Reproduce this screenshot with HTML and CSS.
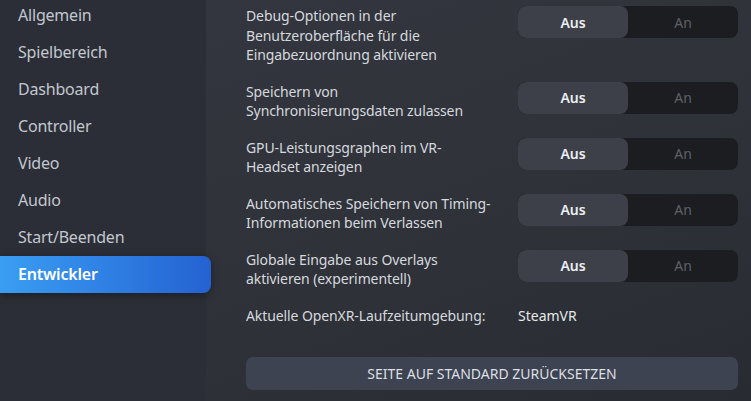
FILE: index.html
```html
<!DOCTYPE html>
<html lang="de">
<head>
<meta charset="utf-8">
<title>Einstellungen – Entwickler</title>
<link rel="stylesheet" href="styles.css">
</head>
<body>
<div class="app">
  <nav class="sidebar">
    <div class="nav-item">Allgemein</div>
    <div class="nav-item">Spielbereich</div>
    <div class="nav-item">Dashboard</div>
    <div class="nav-item">Controller</div>
    <div class="nav-item">Video</div>
    <div class="nav-item">Audio</div>
    <div class="nav-item">Start/Beenden</div>
    <div class="nav-item active">Entwickler</div>
  </nav>
  <main class="content">
    <div class="row">
      <div class="label">Debug-Optionen in der<br>Benutzeroberfläche für die<br>Eingabezuordnung aktivieren</div>
      <div class="toggle"><span class="seg on">Aus</span><span class="seg">An</span></div>
    </div>
    <div class="row">
      <div class="label">Speichern von<br>Synchronisierungsdaten zulassen</div>
      <div class="toggle"><span class="seg on">Aus</span><span class="seg">An</span></div>
    </div>
    <div class="row">
      <div class="label">GPU-Leistungsgraphen im VR-<br>Headset anzeigen</div>
      <div class="toggle"><span class="seg on">Aus</span><span class="seg">An</span></div>
    </div>
    <div class="row">
      <div class="label">Automatisches Speichern von Timing-<br>Informationen beim Verlassen</div>
      <div class="toggle"><span class="seg on">Aus</span><span class="seg">An</span></div>
    </div>
    <div class="row">
      <div class="label">Globale Eingabe aus Overlays<br>aktivieren (experimentell)</div>
      <div class="toggle"><span class="seg on">Aus</span><span class="seg">An</span></div>
    </div>
    <div class="row">
      <div class="label">Aktuelle OpenXR-Laufzeitumgebung:</div>
      <div class="value">SteamVR</div>
    </div>
    <button class="reset">SEITE AUF STANDARD ZURÜCKSETZEN</button>
  </main>
</div>
</body>
</html>
```
FILE: styles.css
```css
* { box-sizing: border-box; }
html, body { margin: 0; padding: 0; height: 100%; }
body {
  font-family: "Noto Sans", "Open Sans", sans-serif;
  background: #2b2e36;
  overflow: hidden;
}
.app {
  display: flex;
  width: 751px;
  height: 401px;
}
.sidebar {
  width: 206px;
  flex: none;
  background: #2b2e36;
  display: flex;
  flex-direction: column;
}
.nav-item {
  flex: none;
  height: 37px;
  line-height: 37px;
  padding-left: 18px;
  font-size: 16px;
  letter-spacing: -0.2px;
  color: #c3c7cf;
}
.nav-item:first-child { margin-top: -3px; }
.nav-item.active {
  width: 211px;
  color: #ffffff;
  font-weight: 600;
  border-radius: 0 8px 8px 0;
  background: linear-gradient(90deg, #3a9ef2 0%, #2f80e4 50%, #2462d1 100%);
  box-shadow: 0 2px 8px rgba(0, 0, 0, 0.35);
  position: relative;
  z-index: 1;
}
.content {
  flex: 1;
  background: linear-gradient(160deg, #33363e 0%, #2e3138 60%, #282b31 100%);
  padding: 6px 13px 0 40px;
  display: flex;
  flex-direction: column;
}
.row {
  display: flex;
  align-items: flex-start;
  margin-bottom: 17px;
}
.label {
  width: 272px;
  flex: none;
  font-size: 14px;
  line-height: 19.5px;
  letter-spacing: -0.1px;
  color: #d6d9de;
}
.toggle {
  display: flex;
  width: 220px;
  height: 32px;
  border-radius: 8px;
  background: #1b1d21;
  overflow: hidden;
}
.seg {
  flex: 1;
  display: flex;
  align-items: center;
  justify-content: center;
  font-size: 14px;
  color: #5d6066;
}
.seg.on {
  background: #3d4049;
  color: #eceef1;
  font-weight: 600;
  border-radius: 8px;
}
.value {
  font-size: 14px;
  line-height: 19.5px;
  color: #e6e8eb;
}
.reset {
  margin-top: 15px;
  width: 492px;
  height: 33px;
  border: none;
  border-radius: 7px;
  background: #3d4350;
  color: #dcdfe4;
  font-family: inherit;
  font-size: 14px;
  padding: 0;
}
```
